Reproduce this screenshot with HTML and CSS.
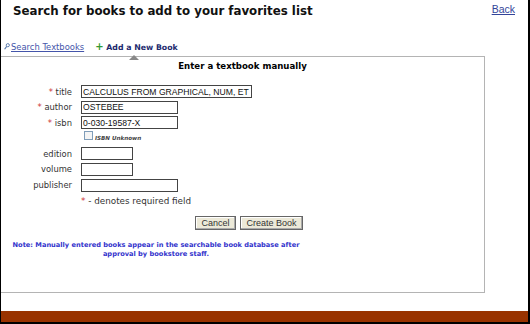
FILE: index.html
```html
<!DOCTYPE html>
<html lang="en">
<head>
    <meta charset="UTF-8">
    <title>Add a New Book</title>
    <link rel="stylesheet" href="styles.css">
</head>
<body>
    <div class="page">
        <div class="top">
            <h1>Search for books to add to your favorites list</h1>
            <a class="back" href="#">Back</a>
        </div>
        <div class="tabs">
            <a class="tab-search" href="#">
                <svg class="lens" width="6" height="7" viewBox="0 0 6 7">
                    <circle cx="3.8" cy="2.2" r="1.6" fill="none" stroke="#5577aa" stroke-width="0.9"/>
                    <path d="M2.7 3.4 L0.6 6.3" stroke="#5577aa" stroke-width="1.1"/>
                </svg>Search Textbooks</a>
            <span class="tab-active"><span class="plus">+</span> Add a New Book</span>
        </div>
        <div class="panel">
            <div class="panel-title">Enter a textbook manually</div>
            <form class="book-form">
                <div class="fields">
                    <label><span class="req">*</span> title</label>
                    <input class="long" type="text" value="CALCULUS FROM GRAPHICAL, NUM, ET">
                    <label><span class="req">*</span> author</label>
                    <input class="mid" type="text" value="OSTEBEE">
                    <label><span class="req">*</span> isbn</label>
                    <input class="mid" type="text" value="0-030-19587-X">
                    <span></span>
                    <span class="unknown"><span class="check"></span><i>ISBN Unknown</i></span>
                    <label>edition</label>
                    <input class="short" type="text">
                    <label>volume</label>
                    <input class="short" type="text">
                    <label>publisher</label>
                    <input class="mid" type="text">
                    <span></span>
                    <span class="legend"><span class="req">*</span> - denotes required field</span>
                </div>
                <div class="buttons">
                    <button type="button" class="cancel">Cancel</button>
                    <button type="button" class="create">Create Book</button>
                </div>
                <p class="note">Note: Manually entered books appear in the searchable book database after<br>approval by bookstore staff.</p>
            </form>
        </div>
        <div class="footer"></div>
    </div>
</body>
</html>
```
FILE: styles.css
```css
* {
    box-sizing: border-box;
}

body {
    margin: 0;
    font-family: "DejaVu Sans", Verdana, sans-serif;
    background-color: #fff;
    color: #000;
}

.page {
    width: 530px;
    height: 324px;
    border-left: 1px solid #000;
    border-right: 2px solid #000;
    border-bottom: 2px solid #000;
    display: flex;
    flex-direction: column;
}

.top {
    display: flex;
    justify-content: space-between;
    align-items: flex-start;
    height: 37px;
    padding: 3px 13px 0 12px;
}

h1 {
    margin: 1px 0 0;
    font-size: 11.8px;
    font-weight: bold;
    color: #111;
}

.back {
    font-family: "Liberation Sans", Arial, sans-serif;
    font-size: 10.5px;
    color: #334499;
    margin-top: 0;
}

.tabs {
    display: flex;
    align-items: center;
    gap: 11px;
    height: 19px;
    padding-left: 3px;
    font-size: 8.4px;
}

.tab-search {
    color: #4455aa;
}

.lens {
    margin-right: 1px;
}

.tab-active {
    position: relative;
    font-size: 7.8px;
    font-weight: bold;
    color: #1c2a6e;
}

.tab-active::after {
    content: "";
    position: absolute;
    left: 50%;
    margin-left: -7px;
    top: 14px;
    border-left: 5px solid transparent;
    border-right: 5px solid transparent;
    border-bottom: 5px solid #888;
}

.plus {
    color: #339933;
    font-size: 10px;
}

.panel {
    height: 237px;
    margin-right: 43px;
    border: 1px solid #b4b4b4;
    border-left: none;
}

.panel-title {
    text-align: center;
    font-size: 8.6px;
    font-weight: bold;
    padding-top: 4px;
    height: 28px;
}

.book-form {
    width: 310px;
}

.fields {
    display: grid;
    grid-template-columns: 71px auto;
    grid-auto-rows: 13px;
    column-gap: 9px;
    row-gap: 2.6px;
    align-items: center;
}

.fields label {
    text-align: right;
    font-size: 8.4px;
    color: #333;
}

.req {
    color: #cc3333;
}

.fields input {
    height: 13px;
    border: 1px solid #444;
    padding: 0 1px;
    font-family: "Liberation Sans", Arial, sans-serif;
    font-size: 8.6px;
    color: #111;
}

.long {
    width: 171px;
}

.mid {
    width: 97px;
}

.short {
    width: 52px;
}

.unknown {
    display: flex;
    align-items: center;
    gap: 2px;
    padding-left: 3px;
    font-size: 5.6px;
    font-weight: bold;
    color: #444;
}

.check {
    width: 9px;
    height: 9px;
    border: 1px solid #7f9db9;
    background: #f4f4f4;
    margin-top: -5px;
}

.legend {
    font-size: 8.8px;
    color: #333;
    margin-top: 1px;
}

.buttons {
    display: flex;
    justify-content: flex-end;
    gap: 4px;
    padding-right: 8px;
    margin-top: 9px;
}

.buttons button {
    height: 14px;
    padding: 0;
    font-family: "Liberation Sans", Arial, sans-serif;
    font-size: 9px;
    color: #333;
    background-color: #ece9d8;
    border: 1px solid #666;
    box-shadow: inset -1px -1px #aaa, inset 1px 1px #fff;
}

.cancel {
    width: 41px;
}

.create {
    width: 63px;
}

.note {
    margin: 11px 0 0;
    text-align: center;
    font-size: 6.65px;
    font-weight: bold;
    line-height: 8.5px;
    color: #3333cc;
}

.footer {
    margin-top: auto;
    height: 11px;
    background-color: #993300;
}
```
